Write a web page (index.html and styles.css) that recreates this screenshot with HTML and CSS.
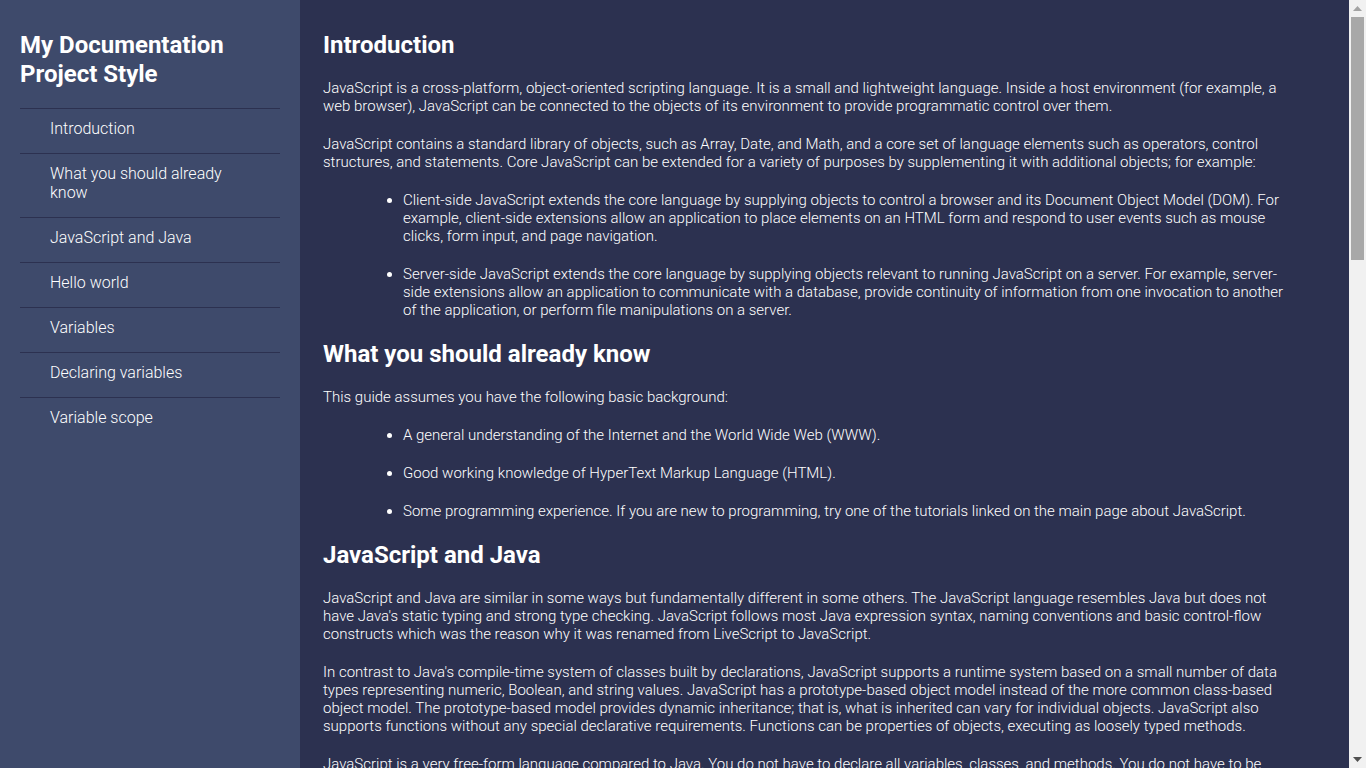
FILE: index.html
```
<!DOCTYPE html>
<html lang="en">
<head>
<meta charset="utf-8">
<title>My Documentation Project Style</title>
<link rel="stylesheet" href="styles.css">
</head>
<body>
<div class="window">
<div class="page">
<div class="layout">
  <nav class="sidebar" id="navbar">
    <header class="sidebar-title">My Documentation Project Style</header>
    <ul class="nav-list">
      <li class="nav-item"><a class="nav-link" href="#Introduction">Introduction</a></li>
      <li class="nav-item"><a class="nav-link" href="#What_you_should_already_know">What you should already know</a></li>
      <li class="nav-item"><a class="nav-link" href="#JavaScript_and_Java">JavaScript and Java</a></li>
      <li class="nav-item"><a class="nav-link" href="#Hello_world">Hello world</a></li>
      <li class="nav-item"><a class="nav-link" href="#Variables">Variables</a></li>
      <li class="nav-item"><a class="nav-link" href="#Declaring_variables">Declaring variables</a></li>
      <li class="nav-item"><a class="nav-link" href="#Variable_scope">Variable scope</a></li>
    </ul>
  </nav>
  <main class="main" id="main-doc">
    <section class="section" id="Introduction">
      <h2 class="section-title">Introduction</h2>
      <p class="text">JavaScript is a cross-platform, object-oriented scripting language. It is a small and lightweight language. Inside a host environment (for example, a web browser), JavaScript can be connected to the objects of its environment to provide programmatic control over them.</p>
      <p class="text">JavaScript contains a standard library of objects, such as Array, Date, and Math, and a core set of language elements such as operators, control structures, and statements. Core JavaScript can be extended for a variety of purposes by supplementing it with additional objects; for example:</p>
      <ul class="list">
        <li class="list-item">Client-side JavaScript extends the core language by supplying objects to control a browser and its Document Object Model (DOM). For example, client-side extensions allow an application to place elements on an HTML form and respond to user events such as mouse clicks, form input, and page navigation.</li>
        <li class="list-item">Server-side JavaScript extends the core language by supplying objects relevant to running JavaScript on a server. For example, server-side extensions allow an application to communicate with a database, provide continuity of information from one invocation to another of the application, or perform file manipulations on a server.</li>
      </ul>
    </section>
    <section class="section" id="What_you_should_already_know">
      <h2 class="section-title">What you should already know</h2>
      <p class="text">This guide assumes you have the following basic background:</p>
      <ul class="list">
        <li class="list-item">A general understanding of the Internet and the World Wide Web (WWW).</li>
        <li class="list-item">Good working knowledge of HyperText Markup Language (HTML).</li>
        <li class="list-item">Some programming experience. If you are new to programming, try one of the tutorials linked on the main page about JavaScript.</li>
      </ul>
    </section>
    <section class="section" id="JavaScript_and_Java">
      <h2 class="section-title">JavaScript and Java</h2>
      <p class="text">JavaScript and Java are similar in some ways but fundamentally different in some others. The JavaScript language resembles Java but does not have Java's static typing and strong type checking. JavaScript follows most Java expression syntax, naming conventions and basic control-flow constructs which was the reason why it was renamed from LiveScript to JavaScript.</p>
      <p class="text">In contrast to Java's compile-time system of classes built by declarations, JavaScript supports a runtime system based on a small number of data types representing numeric, Boolean, and string values. JavaScript has a prototype-based object model instead of the more common class-based object model. The prototype-based model provides dynamic inheritance; that is, what is inherited can vary for individual objects. JavaScript also supports functions without any special declarative requirements. Functions can be properties of objects, executing as loosely typed methods.</p>
      <p class="text">JavaScript is a very free-form language compared to Java. You do not have to declare all variables, classes, and methods. You do not have to be concerned with whether methods are public, private, or protected, and you do not have to implement interfaces. Variables, parameters, and function return types are not explicitly typed.</p>
    </section>
    <section class="section" id="Hello_world">
      <h2 class="section-title">Hello world</h2>
      <p class="text">To get started with writing JavaScript, open the Scratchpad and write your first "Hello world" JavaScript code:</p>
      <pre class="code">function greetMe(yourName) { alert("Hello " + yourName); }
greetMe("World");</pre>
      <p class="text">Select the code in the pad and hit Ctrl+R to watch it unfold in your browser!</p>
    </section>
    <section class="section" id="Variables">
      <h2 class="section-title">Variables</h2>
      <p class="text">You use variables as symbolic names for values in your application. The names of variables, called identifiers, conform to certain rules.</p>
      <p class="text">A JavaScript identifier must start with a letter, underscore (_), or dollar sign ($); subsequent characters can also be digits (0-9). Because JavaScript is case sensitive, letters include the characters "A" through "Z" (uppercase) and the characters "a" through "z" (lowercase).</p>
      <p class="text">You can use ISO 8859-1 or Unicode letters such as å and ü in identifiers. You can also use the Unicode escape sequences as characters in identifiers. Some examples of legal names are Number_hits, temp99, and _name.</p>
    </section>
    <section class="section" id="Declaring_variables">
      <h2 class="section-title">Declaring variables</h2>
      <p class="text">You can declare a variable in three ways:</p>
      <ul class="list">
        <li class="list-item">With the keyword var. For example, var x = 42. This syntax can be used to declare both local and global variables.</li>
        <li class="list-item">By simply assigning it a value. For example, x = 42. This always declares a global variable. It generates a strict JavaScript warning. You shouldn't use this variant.</li>
        <li class="list-item">With the keyword let. For example, let y = 13. This syntax can be used to declare a block scope local variable. See Variable scope below.</li>
      </ul>
    </section>
    <section class="section" id="Variable_scope">
      <h2 class="section-title">Variable scope</h2>
      <p class="text">When you declare a variable outside of any function, it is called a global variable, because it is available to any other code in the current document. When you declare a variable within a function, it is called a local variable, because it is available only within that function.</p>
      <p class="text">JavaScript before ECMAScript 2015 does not have block statement scope; rather, a variable declared within a block is local to the function (or global scope) that the block resides within. For example the following code will log 5, because the scope of x is the function (or global context) within which x is declared, not the block, which in this case is an if statement.</p>
      <pre class="code">if (true) { var x = 5; }
console.log(x); // 5</pre>
      <p class="text">This behavior changes, when using the let declaration introduced in ECMAScript 2015.</p>
      <pre class="code">if (true) { let y = 5; }
console.log(y); // ReferenceError: y is not defined</pre>
    </section>
  </main>
</div>
</div>
<div class="scrollbar" aria-hidden="true">
  <div class="scroll-btn">
    <svg width="9" height="5" viewBox="0 0 9 5"><path d="M0 5 L4.5 0 L9 5 Z" fill="#a3a3a3"/></svg>
  </div>
  <div class="scroll-track">
    <div class="scroll-thumb"></div>
  </div>
  <div class="scroll-btn">
    <svg width="9" height="5" viewBox="0 0 9 5"><path d="M0 0 L9 0 L4.5 5 Z" fill="#505050"/></svg>
  </div>
</div>
</div>
</body>
</html>
```
FILE: styles.css
```
html, body {
  margin: 0;
  padding: 0;
  height: 100%;
  overflow: hidden;
}
body {
  background: #2c3150;
  color: #ffffff;
  font-family: Roboto, "Liberation Sans", Arial, sans-serif;
  font-weight: 300;
}
.window {
  display: flex;
  height: 100vh;
}
.page {
  flex: 1 1 auto;
  min-width: 0;
  overflow-y: auto;
}
.scrollbar {
  flex: 0 0 17px;
  display: flex;
  flex-direction: column;
  background: #f1f1f1;
}
.scroll-btn {
  height: 17px;
  display: flex;
  align-items: center;
  justify-content: center;
}
.scroll-btn svg {
  display: block;
}
.scroll-track {
  flex: 1 1 auto;
  padding: 0 2px;
}
.scroll-thumb {
  height: 243px;
  background: #a8a8a8;
}
.layout {
  display: flex;
  align-items: flex-start;
}
.sidebar {
  position: sticky;
  top: 0;
  flex: 0 0 300px;
  width: 300px;
  height: 100vh;
  box-sizing: border-box;
  padding: 20px;
  background: #3e4a6b;
}
.sidebar-title {
  margin: 11px 0 20px;
  font-size: 24px;
  font-weight: 700;
  line-height: 28.5px;
}
.nav-list {
  list-style: none;
  margin: 0;
  padding: 0;
}
.nav-item {
  border-top: 1px solid #2c3150;
}
.nav-link {
  display: block;
  padding: 10px 30px 15px 30px;
  color: #ffffff;
  text-decoration: none;
  font-size: 16px;
  line-height: 19px;
}
.main {
  flex: 1 1 auto;
  min-width: 0;
  padding: 10px 60px 300px 23px;
}
.section-title {
  margin: 21px 0 20px;
  font-size: 24px;
  font-weight: 700;
  line-height: 28px;
}
.text {
  margin: 20px 0;
  font-size: 15px;
  line-height: 18px;
}
.list {
  margin: 20px 0;
  padding-left: 80px;
  font-size: 15px;
  line-height: 18px;
}
.list-item {
  margin: 0 0 20px;
}
.list-item:last-child {
  margin-bottom: 0;
}
.code {
  margin: 20px 0;
  padding: 15px 20px;
  background: #3e4a6b;
  font-family: "Liberation Mono", "DejaVu Sans Mono", monospace;
  font-size: 14px;
  line-height: 20px;
  white-space: pre-wrap;
}
```
